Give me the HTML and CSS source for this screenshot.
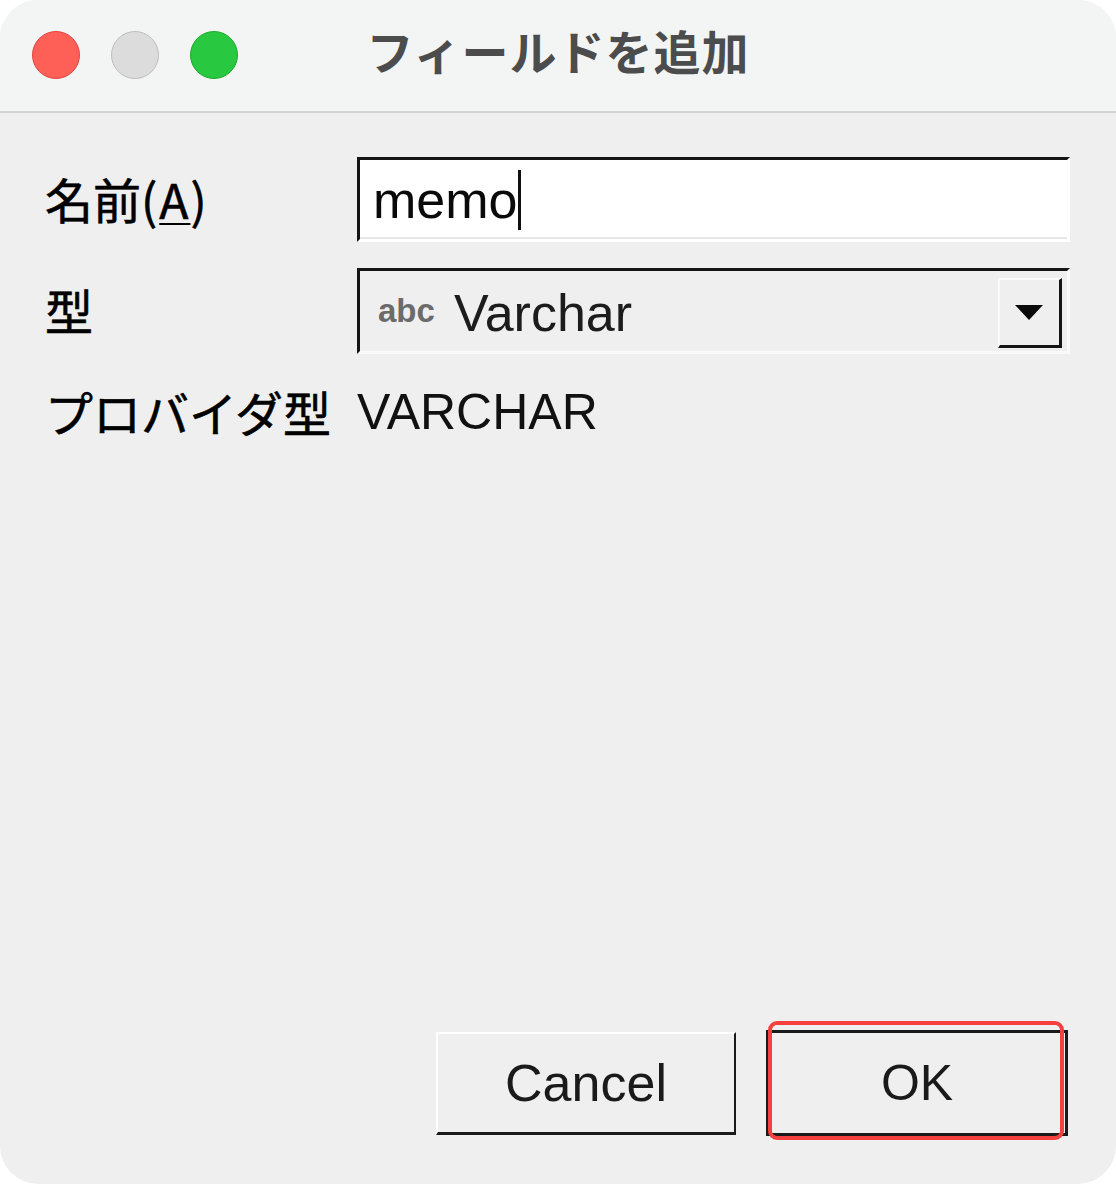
FILE: index.html
```html
<!DOCTYPE html>
<html lang="ja">
<head>
<meta charset="utf-8">
<title>フィールドを追加</title>
<link rel="stylesheet" href="styles.css">
</head>
<body>
<div class="window">
  <div class="titlebar">
    <div class="lights">
      <span class="light red"></span>
      <span class="light gray"></span>
      <span class="light green"></span>
    </div>
    <div class="title">フィールドを追加</div>
    <div></div>
  </div>
  <div class="content">
    <div class="form">
      <div class="label">名前<span class="paren">(<u>A</u>)</span></div>
      <div class="textfield"><span class="value">memo</span><span class="caret"></span></div>
      <div class="label">型</div>
      <div class="combo">
        <span class="abc">abc</span>
        <span class="combo-value">Varchar</span>
        <span class="drop"><span class="tri"></span></span>
      </div>
      <div class="label provider">プロバイダ型</div>
      <div class="provider-value">VARCHAR</div>
    </div>
    <div class="buttons">
      <div class="btn cancel">Cancel</div>
      <div class="btn ok">OK<span class="highlight"></span></div>
    </div>
  </div>
</div>
</body>
</html>
```

FILE: styles.css
```css
html, body {
  margin: 0;
  padding: 0;
  background: #ffffff;
}

.window {
  width: 1116px;
  height: 1184px;
  border-radius: 38px;
  overflow: hidden;
  background: #efefef;
  display: flex;
  flex-direction: column;
  font-family: "Liberation Sans", "Noto Sans CJK JP", sans-serif;
  color: #1a1a1a;
}

.titlebar {
  height: 111px;
  flex: none;
  background: #f3f4f4;
  border-bottom: 2px solid #d3d3d3;
  display: grid;
  grid-template-columns: 1fr auto 1fr;
  align-items: center;
}

.lights {
  display: flex;
  gap: 31px;
  padding-left: 32px;
  padding-bottom: 2px;
}

.light {
  width: 46px;
  height: 46px;
  border-radius: 50%;
  border: 1px solid transparent;
}

.red { background: #fe5f57; border-color: #e0443e; }
.gray { background: #dcdcdc; border-color: #bdbdbd; }
.green { background: #28c840; border-color: #1aab29; }

.title {
  font-family: "Noto Sans CJK JP", sans-serif;
  font-size: 47px;
  font-weight: 700;
  color: #4c4c4c;
  letter-spacing: 1px;
  padding-bottom: 12px;
}

.content {
  flex: 1;
  display: flex;
  flex-direction: column;
  justify-content: space-between;
  padding: 44px 46px 48px 45px;
}

.form {
  display: grid;
  grid-template-columns: 312px 1fr;
  grid-template-rows: 85px 86px 66px;
  row-gap: 26px;
  align-items: center;
}

.label {
  font-family: "Noto Sans CJK JP", sans-serif;
  font-size: 48px;
  font-weight: 400;
  color: #000000;
  line-height: 1;
  padding-bottom: 4px;
  white-space: nowrap;
  -webkit-text-stroke: 0.6px #000;
}

.paren {
  letter-spacing: 2px;
}

.label u {
  text-decoration-thickness: 2px;
  text-underline-offset: 4px;
}

.textfield {
  height: 100%;
  box-sizing: border-box;
  background: #ffffff;
  border-top: 3px solid #151515;
  border-left: 3px solid #151515;
  border-right: 3px solid #ffffff;
  border-bottom: 3px solid #ffffff;
  box-shadow: inset 0 -2px 0 #e6e6e6;
  display: flex;
  align-items: center;
  padding-left: 13px;
}

.value {
  font-size: 52px;
  color: #0a0a0a;
  line-height: 1;
}

.caret {
  width: 3px;
  height: 60px;
  background: #111;
  margin-left: 1px;
}

.combo {
  height: 100%;
  box-sizing: border-box;
  background: #efefef;
  border-top: 3px solid #151515;
  border-left: 3px solid #151515;
  border-right: 3px solid #fafafa;
  border-bottom: 3px solid #fafafa;
  display: flex;
  align-items: center;
  padding: 6px 5px 3px 18px;
}

.abc {
  font-size: 33px;
  font-weight: 700;
  color: #6b6b6b;
  margin-right: 19px;
  padding-bottom: 4px;
}

.combo-value {
  font-size: 52px;
  color: #1c1c1c;
  flex: 1;
  line-height: 1;
}

.drop {
  width: 64px;
  height: 70px;
  box-sizing: border-box;
  border-top: 2px solid #fbfbfb;
  border-left: 2px solid #fbfbfb;
  border-right: 3px solid #151515;
  border-bottom: 3px solid #151515;
  display: flex;
  align-items: center;
  justify-content: center;
  align-self: center;
}

.tri {
  width: 0;
  height: 0;
  border-left: 14px solid transparent;
  border-right: 14px solid transparent;
  border-top: 15px solid #0a0a0a;
  margin-right: 2px;
}

.provider-value {
  font-size: 50px;
  color: #111;
  line-height: 1;
  padding-bottom: 2px;
}

.buttons {
  display: flex;
  justify-content: flex-end;
  align-items: flex-end;
  gap: 30px;
  margin-right: 2px;
}

.btn {
  position: relative;
  width: 300px;
  height: 103px;
  box-sizing: border-box;
  display: flex;
  align-items: center;
  justify-content: center;
  font-size: 52px;
  color: #1a1a1a;
  background: #efefef;
}

.cancel {
  border-top: 2px solid #ffffff;
  border-left: 2px solid #ffffff;
  border-right: 2px solid #1a1a1a;
  border-bottom: 3px solid #1a1a1a;
  margin-bottom: 1px;
}

.ok {
  width: 302px;
  height: 106px;
  border: 3px solid #1a1a1a;
  font-size: 50px;
}

.highlight {
  position: absolute;
  top: -12px;
  left: -1px;
  right: 1px;
  bottom: -7px;
  border: 4px solid #f4403f;
  border-radius: 9px;
}
```
